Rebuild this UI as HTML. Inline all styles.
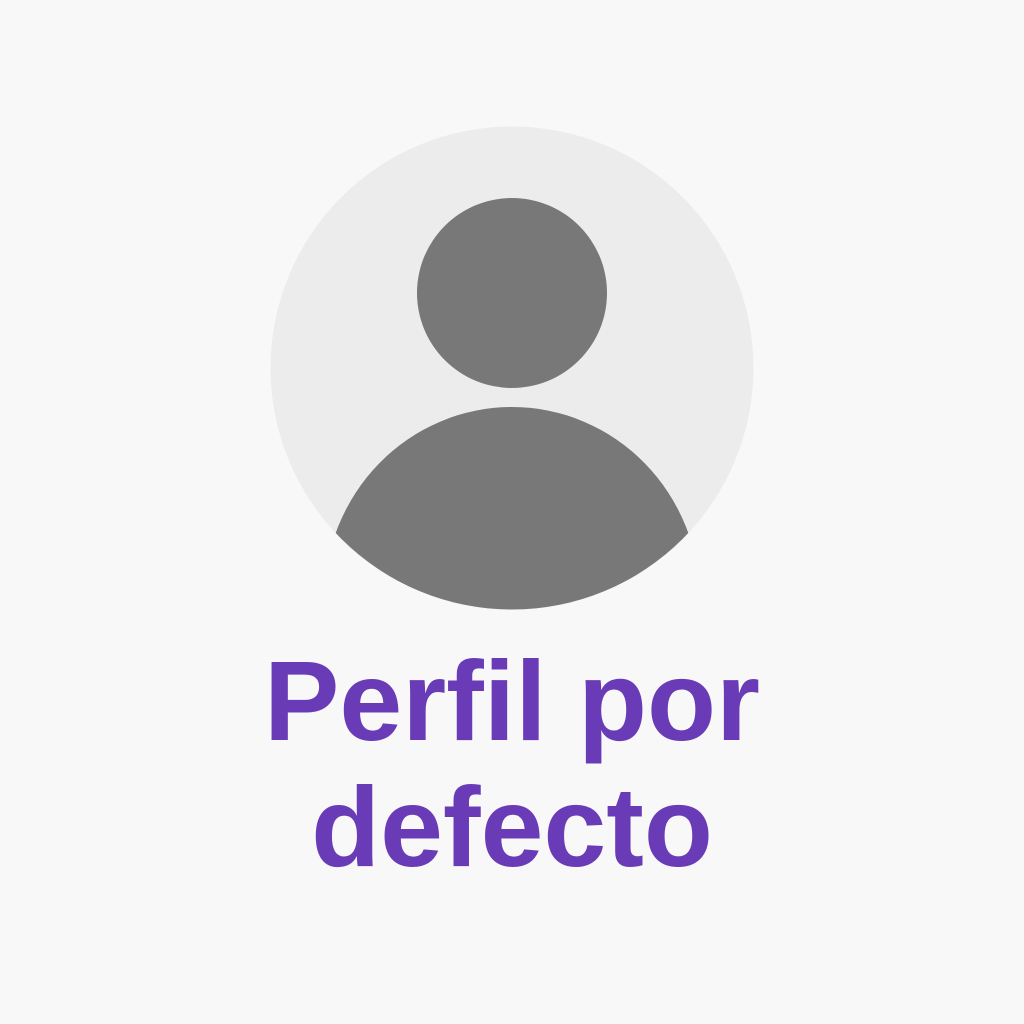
<!DOCTYPE html>
<html><head><meta charset="utf-8"><style>
html,body{margin:0;padding:0;width:1024px;height:1024px;background:#f8f8f8;overflow:hidden}
svg{position:absolute;left:0;top:0}
.t{position:absolute;left:0;width:1024px;text-align:center;font-family:"Liberation Sans",sans-serif;font-weight:bold;font-size:113px;color:#6a3bb6;line-height:1}
</style></head><body>
<svg width="1024" height="1024" viewBox="0 0 1024 1024">
<defs><clipPath id="c"><circle cx="512" cy="368" r="241.5"/></clipPath></defs>
<circle cx="512" cy="368" r="241.5" fill="#ececec"/>
<circle cx="512" cy="293" r="95" fill="#787878"/>
<ellipse cx="512" cy="600" rx="188" ry="193" fill="#787878" clip-path="url(#c)"/>
</svg>
<div class="t" style="top:645px">Perfil por</div>
<div class="t" style="top:771px">defecto</div>
</body></html>
